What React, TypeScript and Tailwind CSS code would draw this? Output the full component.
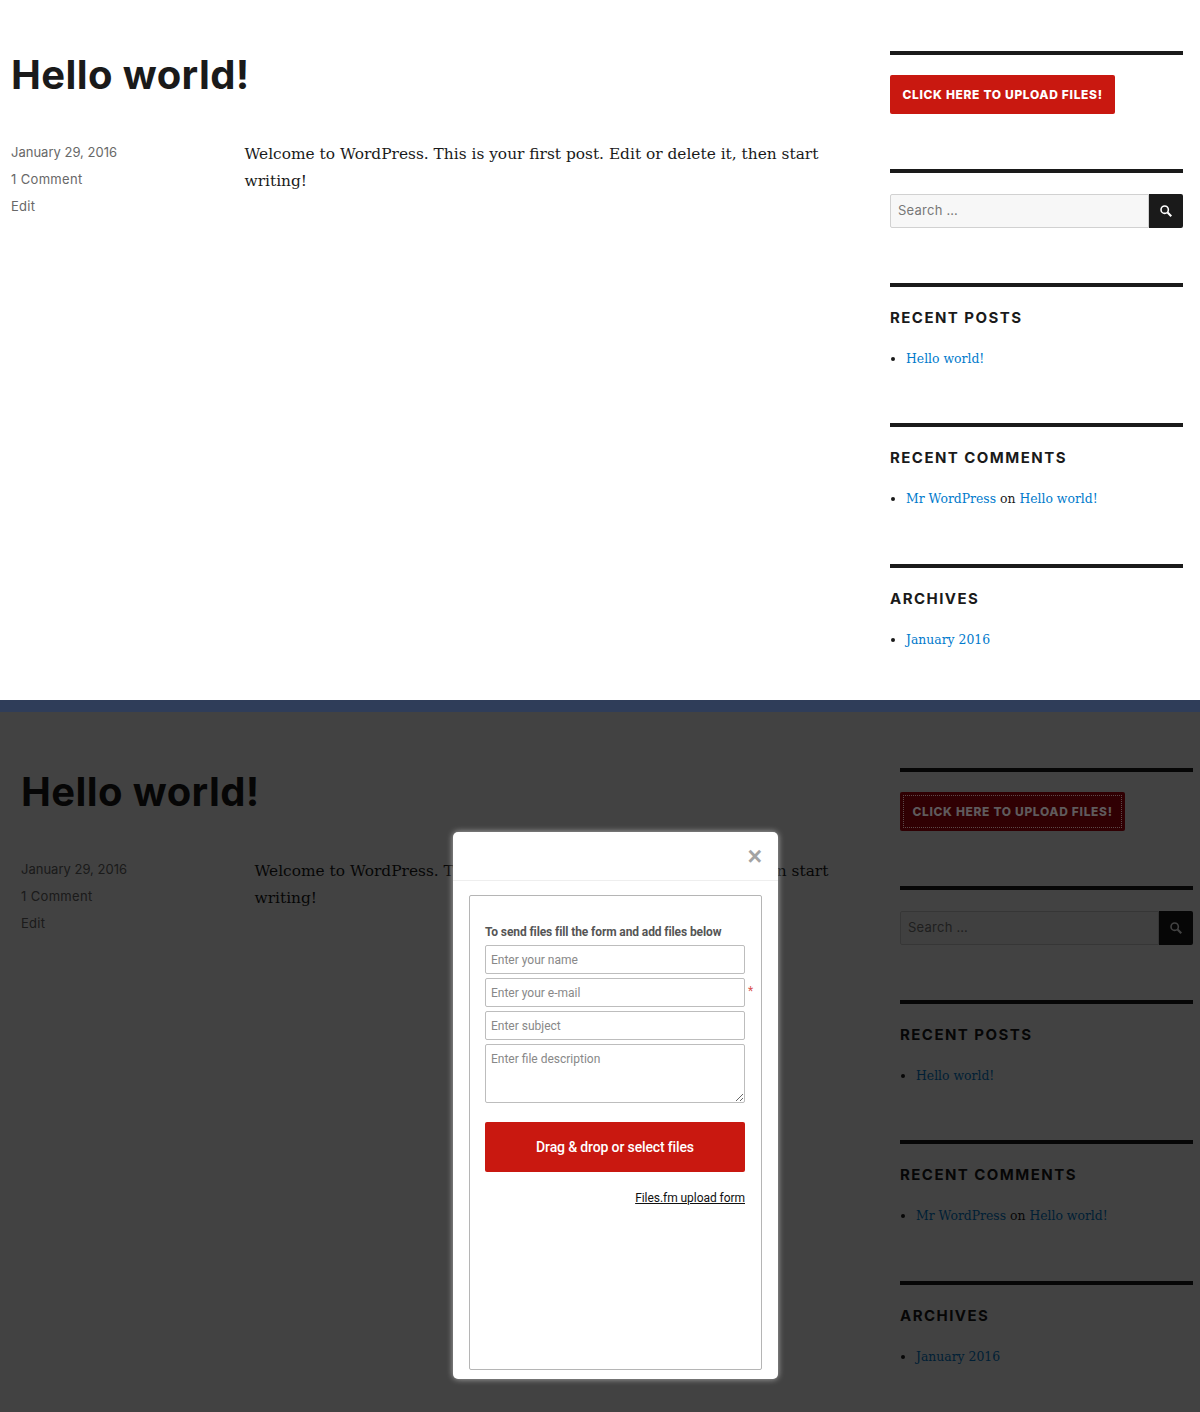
import React from "react";

function SearchGlyph({ className }: { className: string }) {
  return (
    <svg viewBox="0 0 16 16" className={className} fill="none" stroke="currentColor">
      <circle cx="6.5" cy="6.5" r="4.2" strokeWidth="1.8" />
      <path d="M9.8 9.8 14 14" strokeWidth="2.4" />
    </svg>
  );
}

function Widget({ title, spacing, children }: { title: string; spacing: string; children: React.ReactNode }) {
  return (
    <section className={spacing}>
      <h2 className="font-['Inter',sans-serif] text-[15px] leading-[19px] font-bold tracking-[1.45px] text-[#1a1a1a] uppercase">
        {title}
      </h2>
      <ul className="mt-[18px] list-disc pl-4 font-['DejaVu_Serif',serif] text-[12.4px] leading-[27px] text-[#1a1a1a]">
        <li>{children}</li>
      </ul>
    </section>
  );
}

function A({ children }: { children: React.ReactNode }) {
  return <a className="text-[#007acc]">{children}</a>;
}

function Page({ dim }: { dim: boolean }) {
  return (
    <div className={dim ? "flex h-[700px] overflow-hidden bg-white pt-[5px] pl-[21px]" : "flex h-[700px] overflow-hidden bg-white pl-[11px]"}>
      <main className="w-[879px] shrink-0 pt-[51px]">
        <h1 className="font-['Inter',sans-serif] text-[40px] leading-[48px] font-bold tracking-[0.4px] text-[#1a1a1a]">
          Hello world!
        </h1>
        <div className="mt-[41px] flex">
          <div className="-mt-px w-[233.5px] shrink-0 font-['Inter',sans-serif] text-[13px] leading-[27px] text-[#686868]">
            <p>January 29, 2016</p>
            <p className="tracking-[0.35px]">1 Comment</p>
            <p className="tracking-[0.3px]">Edit</p>
          </div>
          <p className="w-[590px] pt-px font-['DejaVu_Serif',serif] text-[15.4px] leading-[27px] text-[#1a1a1a]">
            Welcome to WordPress. This is your first post. Edit or delete it, then start writing!
          </p>
        </div>
      </main>
      <aside className="w-[293px] shrink-0 pt-[51px]">
        <section className="mb-[55px] border-t-4 border-[#1a1a1a] pt-5">
          <button
            className={
              dim
                ? "relative z-[15] flex h-[39px] w-[225px] items-center justify-center rounded-[2px] bg-[#300003] pt-px font-['Inter',sans-serif] text-[12px] font-extrabold tracking-[0.66px] text-[#5f5a5c] uppercase outline-1 -outline-offset-[4px] outline-[#5c4a4a] outline-dotted"
                : "flex h-[39px] w-[225px] items-center justify-center rounded-[2px] bg-[#c91810] pt-px font-['Inter',sans-serif] text-[12px] font-extrabold tracking-[0.66px] text-white uppercase"
            }
          >
            Click here to upload files!
          </button>
        </section>
        <section className="mb-[55px] border-t-4 border-[#1a1a1a] pt-[21px]">
          <form className="flex h-[34px]">
            <input
              placeholder="Search …"
              className="h-full min-w-0 flex-1 rounded-l-[2px] border border-[#d1d1d1] bg-[#f7f7f7] px-[7px] pb-[3px] font-['Inter',sans-serif] text-[13px] tracking-[0.25px] text-[#777] placeholder:text-[#777]"
            />
            <div className="flex h-full w-[34px] items-center justify-center rounded-r-[2px] bg-[#1a1a1a] text-white">
              <SearchGlyph className="h-[14px] w-[14px]" />
            </div>
          </form>
        </section>
        <Widget title="Recent Posts" spacing="mb-[51px] border-t-4 border-[#1a1a1a] pt-[21px]">
          <A>Hello world!</A>
        </Widget>
        <Widget title="Recent Comments" spacing="mb-[52px] border-t-4 border-[#1a1a1a] pt-[21px]">
          <A>Mr WordPress</A> on <A>Hello world!</A>
        </Widget>
        <Widget title="Archives" spacing="mb-[51px] border-t-4 border-[#1a1a1a] pt-[21px]">
          <A>January 2016</A>
        </Widget>
      </aside>
    </div>
  );
}

const field =
  "block h-[29px] w-[260px] rounded-[2px] border border-[#bdbdbd] bg-white px-[5px] font-['Roboto',sans-serif] text-[12px] text-[#555] placeholder:text-[#888]";

export default function App() {
  return (
    <div className="w-[1200px] bg-white">
      <Page dim={false} />
      <div className="h-3 bg-[#2f3d59]" />
      <div className="relative h-[700px] overflow-hidden">
        <Page dim={true} />
        <div className="absolute inset-0 z-10 bg-black/[.74]" />
        <div className="absolute top-[120px] left-[453px] z-20 flex h-[547px] w-[325px] flex-col rounded-[5px] bg-white shadow-[0_0_6px_rgba(255,255,255,0.6)]">
          <div className="flex h-[49px] shrink-0 items-center justify-end border-b border-[#eeeeee] pr-4 pt-px">
            <span className="font-['Liberation_Sans',sans-serif] text-[25px] leading-none font-bold text-[#a3a3a3]">×</span>
          </div>
          <div className="mx-4 mt-[14px] h-[475px] rounded-[2px] border border-[#b5b5b5] px-[15px] pt-[28px]">
            <p className="font-['Roboto',sans-serif] text-[12px] leading-[16px] font-bold tracking-[-0.11px] text-[#555]">
              To send files fill the form and add files below
            </p>
            <div className="mt-[5px] flex flex-col gap-1">
              <input placeholder="Enter your name" className={field} />
              <div className="relative">
                <input placeholder="Enter your e-mail" className={field} />
                <span className="absolute top-[6px] left-[263px] font-['Roboto',sans-serif] text-[12px] leading-[14px] text-[#d9534f]">*</span>
              </div>
              <input placeholder="Enter subject" className={field} />
              <textarea
                placeholder="Enter file description"
                className="block h-[59px] w-[260px] rounded-[2px] border border-[#bdbdbd] bg-white px-[5px] pt-[7px] font-['Roboto',sans-serif] text-[12px] leading-[14px] text-[#555] placeholder:text-[#888]"
              />
            </div>
            <button className="mt-[19px] h-[50px] w-[260px] rounded-[2px] bg-[#c91810] font-['Roboto',sans-serif] text-[14px] font-medium tracking-[-0.14px] text-white">
              Drag &amp; drop or select files
            </button>
            <div className="mt-[19px] w-[260px] text-right font-['Roboto',sans-serif] text-[12px] leading-[14px] tracking-[-0.05px] text-[#111] underline">
              Files.fm upload form
            </div>
          </div>
        </div>
      </div>
    </div>
  );
}
